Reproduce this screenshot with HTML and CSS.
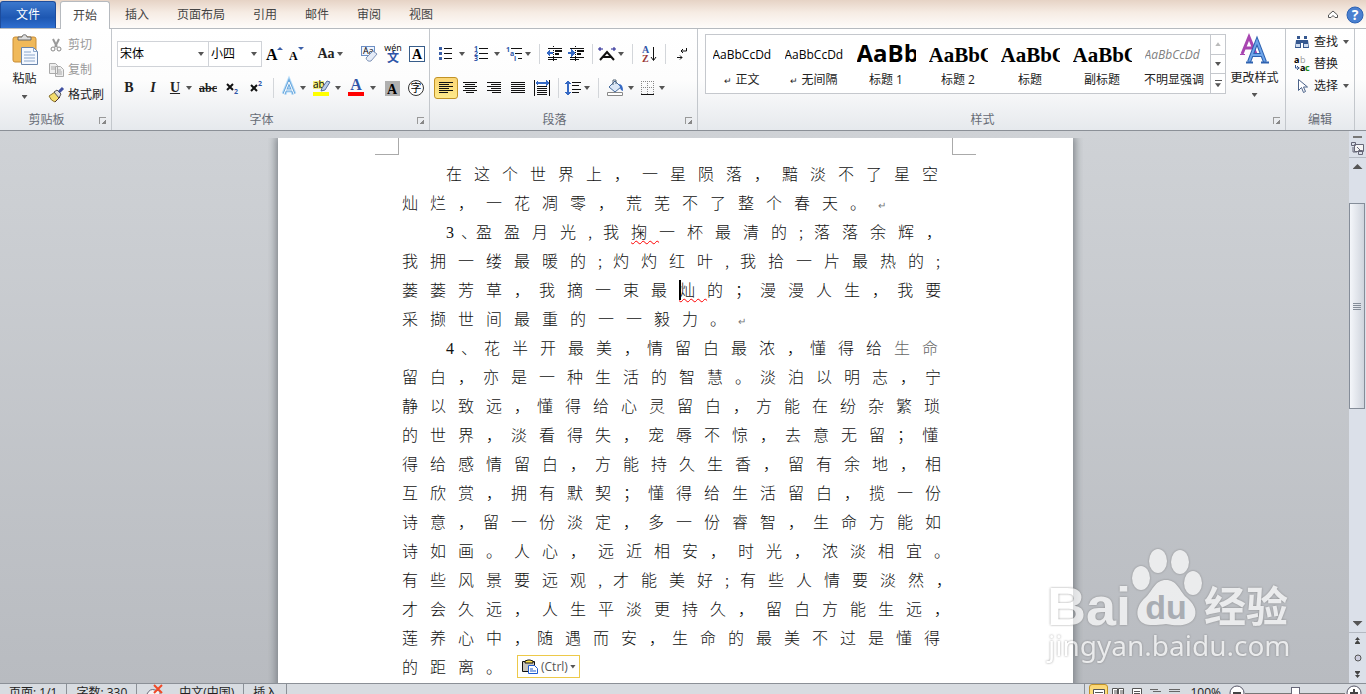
FILE: index.html
```html
<!DOCTYPE html>
<html lang="zh-CN">
<head>
    <meta charset="UTF-8">
    <meta name="viewport" content="width=device-width, initial-scale=1.0">
    <title>Word</title>
    <link rel="stylesheet" href="styles.css">
</head>
<body>
    <!-- 选项卡 -->
    <nav class="tabs">
        <button class="tab file">文件</button>
        <button class="tab active">开始</button>
        <button class="tab">插入</button>
        <button class="tab">页面布局</button>
        <button class="tab">引用</button>
        <button class="tab">邮件</button>
        <button class="tab">审阅</button>
        <button class="tab">视图</button>
        <div class="tabs-right">
            <button class="btn" aria-label="最小化功能区"><svg width="12" height="10"><path d="M1.500 5 6 1l4.500 4v2.500H8L6 5.500 4 7.500H1.500z" fill="#fff" stroke="#555"/></svg></button>
            <button class="btn" aria-label="帮助"><svg width="18" height="18"><circle cx="9" cy="9" r="8" fill="#4a80d0" stroke="#2d62b4"/><text x="9" y="14" text-anchor="middle" class="help-mark">?</text></svg></button>
        </div>
    </nav>

    <!-- 功能区 -->
    <header class="ribbon">
        <section class="group g-clip">
            <div class="group-body clip">
                <button class="paste">
                    <svg width="28" height="32">
                        <rect x="2" y="3" width="23" height="25" rx="2" fill="#f0b95a" stroke="#c98d35"/>
                        <path d="M7 6V3h4c0-3 5-3 5 0h4v3z" fill="#ddd" stroke="#666"/>
                        <path d="M10.500 13.500h12l4 4v13h-16z" fill="#f4f8ff" stroke="#6a86ac"/>
                        <path d="M22.500 13.500v4h4M13 18h7M13 21h11M13 24h11M13 27h11" fill="none" stroke="#8ba6ca"/>
                    </svg>
                    <span>粘贴</span>
                    <i class="arrow"></i>
                </button>
                <div class="clip-list">
                    <button class="line-btn off"><svg width="16" height="16"><path d="M5 2l4 8M11 2 7 10" stroke="#999" stroke-width="2"/><circle cx="5" cy="12" r="2" fill="none" stroke="#888"/><circle cx="11" cy="12" r="2" fill="none" stroke="#888"/></svg>剪切</button>
                    <button class="line-btn off"><svg width="16" height="16"><path d="M1.500 1.500h6l2 2v8h-8zM7.500 4.500h5l3 3v7h-8z" fill="#eee" stroke="#aaa"/><path d="M3 5h4M3 7h4M9 8h4M9 10h5M9 12h5" stroke="#aaa"/></svg>复制</button>
                    <button class="line-btn"><svg width="16" height="16"><path d="M1 9l6-4 5 5-5 5q-4-1-6-6z" fill="#f3dc6c" stroke="#8a7430"/><path d="M6 5l3-2 4 4-2 4z" fill="#ddd" stroke="#555"/><path d="M11 5l4-4" stroke="#3f4fa0" stroke-width="3"/><path d="M7 15l5-5" stroke="#533"/></svg>格式刷</button>
                </div>
            </div>
            <div class="group-label">剪贴板<i class="launcher"></i></div>
        </section>

        <section class="group g-font">
            <div class="group-body rows">
                <div class="row">
                    <div class="combo name"><input type="text" value="宋体" aria-label="字体"><i class="arrow"></i></div>
                    <div class="combo size"><input type="text" value="小四" aria-label="字号"><i class="arrow"></i></div>
                    <button class="btn w24" aria-label="增大字体"><svg width="20" height="20"><text x="2" y="16" class="serif s16">A</text><path d="M13 6h6l-3-3z" fill="#3a5fa8"/></svg></button>
                    <button class="btn w20" aria-label="缩小字体"><svg width="20" height="20"><text x="3" y="16" class="serif s12">A</text><path d="M12 3h6l-3 3z" fill="#3a5fa8"/></svg></button>
                    <i class="sep"></i>
                    <button class="btn w20 serif s14" aria-label="更改大小写">Aa</button><i class="arrow"></i>
                    <i class="sep"></i>
                    <button class="btn w24" aria-label="清除格式"><svg width="18" height="18"><rect x="1.500" y="1.500" width="13" height="9" fill="#eef4ff" stroke="#6d8fc4"/><text x="3" y="9" class="s9">Aa</text><path d="M6 13l7-7 4 3-6 7q-4 1-5-3z" fill="#e5ecf8" stroke="#7f93b6"/></svg></button>
                    <button class="btn w24" aria-label="拼音指南"><svg width="18" height="20"><text x="9" y="7" text-anchor="middle" class="s9">wén</text><text x="9" y="18" text-anchor="middle" class="s12 blue bold">文</text></svg></button>
                    <button class="btn w24" aria-label="字符边框"><svg width="17" height="17"><rect x=".5" y=".5" width="15" height="15" fill="#fff" stroke="#385d8a"/><text x="8" y="13" text-anchor="middle" class="serif s14">A</text></svg></button>
                </div>
                <div class="row">
                    <button class="btn w24 serif s14">B</button>
                    <button class="btn w24 serif s14 it">I</button>
                    <button class="btn w20 serif s14 un">U</button><i class="arrow"></i>
                    <button class="btn w24 serif s12 strike">abc</button>
                    <button class="btn w24" aria-label="下标"><svg width="16" height="16"><path d="M3 4l6 6M9 4l-6 6" stroke="#111" stroke-width="2"/><text x="10" y="14" class="s7 blue bold">2</text></svg></button>
                    <button class="btn w24" aria-label="上标"><svg width="16" height="16"><path d="M3 5l6 6M9 5l-6 6" stroke="#111" stroke-width="2"/><text x="10" y="6" class="s7 blue bold">2</text></svg></button>
                    <i class="sep"></i>
                    <button class="btn w20" aria-label="文本效果"><svg width="18" height="18"><path d="M4 15 9 3l5 12M6 11h6" fill="none" stroke="#b5dcfa" stroke-width="5"/><path d="M4 15 9 3l5 12M6 11h6" fill="none" stroke="#6aa7dc" stroke-width="3"/><path d="M4 15 9 3l5 12M6 11h6" fill="none" stroke="#fff"/></svg></button><i class="arrow"></i>
                    <button class="btn w24" aria-label="突出显示"><svg width="18" height="18"><path d="M0 2h11v8H0z" fill="#f3ee7d"/><text x="0" y="9" class="s10">ab</text><path d="M9 9l5-7 3 1-5 8-4 1z" fill="#b9cde8" stroke="#55709c"/><path d="M0 13h16v4H0z" fill="#ff0"/></svg></button><i class="arrow"></i>
                    <button class="btn w24" aria-label="字体颜色"><svg width="18" height="18"><text x="8" y="11" text-anchor="middle" class="serif s16 blue">A</text><path d="M0 13h16v4H0z" fill="red"/></svg></button><i class="arrow"></i>
                    <button class="btn w24" aria-label="字符底纹"><svg width="15" height="15"><path d="M0 0h15v15H0z" fill="#b0b0b0"/><text x="7" y="13" text-anchor="middle" class="serif s14">A</text></svg></button>
                    <button class="btn w24" aria-label="带圈字符"><svg width="18" height="18"><circle cx="9" cy="9" r="7.500" fill="#fff" stroke="#333"/><text x="9" y="13" text-anchor="middle" class="s11">字</text></svg></button>
                </div>
            </div>
            <div class="group-label">字体<i class="launcher"></i></div>
        </section>

        <section class="group g-para">
            <div class="group-body rows">
                <div class="row">
                    <button class="btn w24" aria-label="项目符号"><svg class="crisp" width="16" height="16"><path d="M1 1h3v3H1zM1 6h3v3H1zM1 11h3v3H1z" fill="#3a5fa8"/><path d="M6 2.500h8M6 7.500h8M6 12.500h8" stroke="#111"/></svg></button><i class="arrow"></i>
                    <button class="btn w24" aria-label="编号"><svg width="16" height="16"><text x="1" y="5" class="s7 blue bold">1</text><text x="1" y="10" class="s7 blue bold">2</text><text x="1" y="15" class="s7 blue bold">3</text><path d="M6 2.500h9M6 7.500h9M6 12.500h9" stroke="#111"/></svg></button><i class="arrow"></i>
                    <button class="btn w20" aria-label="多级列表"><svg width="18" height="16"><text x="1" y="6" class="s7 blue bold">1</text><text x="5" y="10" class="s7 blue bold">a</text><text x="9" y="15" class="s7 blue bold">i</text><path d="M6 2.500h11M10 7.500h7M13 12.500h4" stroke="#111"/></svg></button><i class="arrow"></i>
                    <i class="sep"></i>
                    <button class="btn w20" aria-label="减少缩进"><svg class="crisp" width="17" height="16"><path d="M7.500 0v16" stroke="#111" stroke-dasharray="1"/><path d="M2 2.500h14M2 11.500h14M2 13.500h9" stroke="#111"/><path d="M9 5h7M9 8h4" stroke="#111" stroke-width="2"/><path d="M0 7l4-4v3h3v2H4v3z" fill="#3569c4"/></svg></button>
                    <button class="btn w24" aria-label="增加缩进"><svg class="crisp" width="17" height="16"><path d="M7.500 0v16" stroke="#111" stroke-dasharray="1"/><path d="M2 2.500h14M2 11.500h14M2 13.500h9" stroke="#111"/><path d="M9 5h7M9 8h4" stroke="#111" stroke-width="2"/><path d="M7 7 3 3v3H0v2h3v3z" fill="#3569c4"/></svg></button>
                    <i class="sep"></i>
                    <button class="btn w20" aria-label="中文版式"><svg width="18" height="16"><path d="M2 14l7-8 7 8M5 11h8" fill="none" stroke="#111" stroke-width="2"/><path d="M0 3h5M2 1v4M18 3h-5M16 1v4" fill="none" stroke="#1b1b8e"/></svg></button><i class="arrow"></i>
                    <i class="sep"></i>
                    <button class="btn w24" aria-label="排序"><svg width="17" height="18"><text x="1" y="8" class="serif s10 blue">A</text><text x="1" y="17" class="serif s10 brown">Z</text><path d="M12.500 2v13M10 12l2.500 3.500L15 12" fill="none" stroke="#111"/></svg></button>
                    <i class="sep"></i>
                    <button class="btn w24" aria-label="编辑标记"><svg width="12" height="14"><path d="M10.500 1v3H5M7 2 5 4l2 2M1 10.500h5M4 8.500l2 2-2 2" fill="none" stroke="#111"/></svg></button>
                </div>
                <div class="row">
                    <button class="btn w24 on" aria-label="左对齐"><svg class="crisp" width="14" height="12"><path d="M0 .5h14M0 2.500h10M0 4.500h14M0 6.500h10M0 8.500h14M0 10.500h9" stroke="#111"/></svg></button>
                    <button class="btn w24" aria-label="居中"><svg class="crisp" width="14" height="12"><path d="M0 .5h14M2 2.500h10M0 4.500h14M2 6.500h10M0 8.500h14M3 10.500h8" stroke="#111"/></svg></button>
                    <button class="btn w24" aria-label="右对齐"><svg class="crisp" width="14" height="12"><path d="M0 .5h14M4 2.500h10M0 4.500h14M4 6.500h10M0 8.500h14M5 10.500h9" stroke="#111"/></svg></button>
                    <button class="btn w24" aria-label="两端对齐"><svg class="crisp" width="14" height="12"><path d="M0 .5h14M0 2.500h14M0 4.500h14M0 6.500h14M0 8.500h14M0 10.500h14" stroke="#111"/></svg></button>
                    <button class="btn w24" aria-label="分散对齐"><svg class="crisp" width="16" height="16"><path d="M.5 0v16M15.500 0v16M3 6.500h10M3 8.500h10M3 10.500h10M3 12.500h10M3 14.500h10" stroke="#111"/><path d="M1 3l3-3v2h8V0l3 3-3 3V4H4v2z" fill="#3569c4"/></svg></button>
                    <i class="sep"></i>
                    <button class="btn w20" aria-label="行距"><svg class="crisp" width="16" height="16"><path d="M3 0l3 4H4v8h2l-3 4-3-4h2V4H0z" fill="#3569c4"/><path d="M7 2.500h9M7 5.500h7M7 9.500h9M7 12.500h7" stroke="#111"/></svg></button><i class="arrow"></i>
                    <i class="sep"></i>
                    <button class="btn w24" aria-label="底纹"><svg width="17" height="18"><path d="M2 8l6-6 6 6-6 5z" fill="#dce8f7" stroke="#456a9c"/><path d="M6 6V1h3v4" fill="none" stroke="#567"/><path d="M12 5q4 0 4 7-3-1-3-4z" fill="#3569c4"/><path d="M.5 13.500h15v3H.5z" fill="#fff" stroke="#888"/></svg></button><i class="arrow"></i>
                    <button class="btn w20" aria-label="边框"><svg class="crisp" width="14" height="15"><path d="M.5 0v13M6.500 0v13M12.500 0v13M0 .5h13M0 6.500h13" stroke="#888" stroke-dasharray="1"/><path d="M0 13.500h13" stroke="#111"/></svg></button><i class="arrow"></i>
                </div>
            </div>
            <div class="group-label">段落<i class="launcher"></i></div>
        </section>

        <section class="group g-style">
            <div class="group-body styles">
                <div class="gallery">
                    <button class="style"><b class="pv">AaBbCcDd</b><span><small>↵</small> 正文</span></button>
                    <button class="style"><b class="pv">AaBbCcDd</b><span><small>↵</small> 无间隔</span></button>
                    <button class="style"><b class="pv h1">AaBb</b><span>标题 1</span></button>
                    <button class="style"><b class="pv h2">AaBbC</b><span>标题 2</span></button>
                    <button class="style"><b class="pv h2">AaBbC</b><span>标题</span></button>
                    <button class="style"><b class="pv h2">AaBbC</b><span>副标题</span></button>
                    <button class="style"><b class="pv em">AaBbCcDd</b><span>不明显强调</span></button>
                    <div class="gallery-nav">
                        <button class="off" aria-label="上一行"><i class="arrow up"></i></button>
                        <button aria-label="下一行"><i class="arrow"></i></button>
                        <button class="more" aria-label="其他"><i class="arrow"></i></button>
                    </div>
                </div>
                <button class="change">
                    <svg width="30" height="30"><path d="M2 19 9 2l7 17M5 13h8" fill="none" stroke="#a845b0" stroke-width="3"/><path d="M0 19.500h5M12 19.500h5" stroke="#a845b0"/><path d="M9 27 17 6l8 21M12 20h10" fill="none" stroke="#2e62b0" stroke-width="4"/><path d="M9 27 17 6l8 21M12 20h10" fill="none" stroke="#6ea5ea" stroke-width="2"/><path d="M6 27.500h7M21 27.500h8" stroke="#2e62b0" stroke-width="2"/></svg>
                    <span>更改样式</span>
                    <i class="arrow"></i>
                </button>
            </div>
            <div class="group-label">样式<i class="launcher"></i></div>
        </section>

        <section class="group g-edit">
            <div class="group-body edit">
                <button class="line-btn"><svg width="16" height="16"><path d="M3 2h3v3H3zM10 2h3v3h-3zM1 14l1-8h5v8zM9 14V6h5l1 8zM6 6h4v3H6z" fill="#35578f"/><path d="M2 10h4v3H2zM10 10h4v3h-4z" fill="#cfdcf0"/></svg>查找<i class="arrow"></i></button>
                <button class="line-btn"><svg width="16" height="16"><text x="0" y="7" class="s9 bold">a</text><text x="6" y="7" class="s9 gray">b</text><text x="6" y="15" class="s9 bold">a</text><text x="11" y="15" class="s9 bold green">c</text><path d="M1.500 9v3h4M3 10l2 2-2 2" fill="none" stroke="#35578f"/></svg>替换</button>
                <button class="line-btn"><svg width="16" height="16"><path d="M4.500 1.500v11l3-3 2 5 2-1-2-4.500h4z" fill="#fff" stroke="#4b6289"/></svg>选择<i class="arrow"></i></button>
            </div>
            <div class="group-label">编辑</div>
        </section>
    </header>

    <!-- 文档 -->
    <main class="workspace">
        <div class="desk">
            <article class="page">
                <i class="crop left"></i>
                <i class="crop right"></i>
                <p class="ln first">在这个世界上，一星陨落，黯淡不了星空</p>
                <p class="ln">灿烂，一花凋零，荒芜不了整个春天。<i class="ret">↵</i></p>
                <p class="ln first"><i class="num">3</i><i class="half">、</i>盈盈月光<i class="half">,</i>我<u>掬</u>一杯最清的<i class="half">;</i>落落余辉，</p>
                <p class="ln">我拥一缕最暖的<i class="half">;</i>灼灼红叶<i class="half">,</i>我拾一片最热的<i class="half">;</i></p>
                <p class="ln tight">蒌蒌芳草<i>，</i>我摘一束最<span class="caret"></span><u>灿</u>的<i>；</i>漫漫人生<i>，</i>我要</p>
                <p class="ln">采撷世间最重的一一毅力。<i class="ret">↵</i></p>
                <p class="ln first tighter"><i class="num">4</i><i>、</i>花半开最美<i>，</i>情留白最浓<i>，</i>懂得给<span class="light">生命</span></p>
                <p class="ln tight">留白<i>，</i>亦是一种生活的智慧<i>。</i>淡泊以明志<i>，</i>宁</p>
                <p class="ln tighter">静以致远<i>，</i>懂得给心灵留白<i>，</i>方能在纷杂繁琐</p>
                <p class="ln tight">的世界<i>，</i>淡看得失<i>，</i>宠辱不惊<i>，</i>去意无留<i>；</i>懂</p>
                <p class="ln tight">得给感情留白<i>，</i>方能持久生香<i>，</i>留有余地<i>，</i>相</p>
                <p class="ln tight">互欣赏<i>，</i>拥有默契<i>；</i>懂得给生活留白<i>，</i>揽一份</p>
                <p class="ln tight">诗意<i>，</i>留一份淡定<i>，</i>多一份睿智<i>，</i>生命方能如</p>
                <p class="ln">诗如画。人心，远近相安，时光，浓淡相宜。</p>
                <p class="ln">有些风景要远观<i class="half">,</i>才能美好<i class="half">;</i>有些人情要淡然，</p>
                <p class="ln">才会久远，人生平淡更持久，留白方能生远，</p>
                <p class="ln tighter">莲养心中<i>，</i>随遇而安<i>，</i>生命的最美不过是懂得</p>
                <p class="ln last">的距离。<button class="paste-opt"><svg width="18" height="16"><path d="M1.500 2.500h12v10h-12z" fill="#c9c5bb" stroke="#111"/><path d="M4 4V2l3-1h2l3 1v2z" fill="#ffe34d" stroke="#111"/><path d="M7.500 6.500h6l3 3v5h-9z" fill="#fff" stroke="#1d5bd0"/><path d="M9 10h3M9 12h6" stroke="#1d5bd0"/></svg>(Ctrl)<i class="arrow"></i></button></p>
            </article>
        </div>

        <aside class="scroll">
            <i class="split"></i>
            <button class="ruler" aria-label="标尺"><svg width="13" height="13"><path d="M3.500 2.500h9v7h-9z" fill="#f5f5f5" stroke="#667"/><path d="M.5.500h4v3h-4zM7.500 8.500h4v4h-4zM2 5v5h4M6 5l4 4" fill="none" stroke="#667"/></svg></button>
            <button aria-label="向上滚动"><i class="arrow big up"></i></button>
            <div class="track"><div class="thumb"><i></i></div></div>
            <button aria-label="向下滚动"><i class="arrow big"></i></button>
            <button class="nav first-nav" aria-label="上一页"><svg width="7" height="8"><path d="M3.500 0L6 3H1zM3.500 3L6 6H1zM1 6h5v1H1z" fill="#444"/></svg></button>
            <button class="nav" aria-label="选择浏览对象"><svg width="8" height="8"><circle cx="4" cy="4" r="3" fill="#ccd" stroke="#555"/></svg></button>
            <button class="nav" aria-label="下一页"><svg width="7" height="8"><path d="M1 0h5v1H1zM1 1h5L3.500 4zM1 4h5L3.500 7z" fill="#444"/></svg></button>
        </aside>

        <svg class="watermark" width="256" height="120">
            <g class="wm">
                <text x="2" y="80" class="wm-bai">Bai</text>
                <ellipse cx="96" cy="33" rx="9" ry="12"/>
                <ellipse cx="113" cy="16" rx="9" ry="12"/>
                <ellipse cx="135" cy="17" rx="9" ry="12"/>
                <ellipse cx="148" cy="38" rx="9" ry="12"/>
                <path d="M121 35c-11 0-13 10-20 17-7 6-10 13-8 20 3 9 13 9 28 7 15 3 26 1 29-8 2-7-2-13-9-19-7-7-9-17-20-17z"/>
                <text x="159" y="77" class="wm-jy">经验</text>
                <text x="3" y="111" class="wm-url">jingyan.baidu.com</text>
            </g>
            <text x="121" y="74" text-anchor="middle" class="wm-du">du</text>
        </svg>
    </main>

    <!-- 状态栏 -->
    <footer class="status">
        <div class="status-in">
            <span class="cell">页面: 1/1</span>
            <span class="cell">字数: 330</span>
            <span class="cell proof"><svg width="18" height="16"><path d="M1 10q3-6 8-4l5 1v6H1z" fill="#f4f4f4" stroke="#667"/><path d="M8 1l8 8M16 1l-8 8" stroke="#f04a28" stroke-width="2"/></svg>中文(中国)</span>
            <span class="cell">插入</span>
            <div class="views">
                <button class="on" aria-label="页面视图"><svg width="12" height="12"><path d="M.5.500h11v11H.5zM2 3.500h8M2 5.500h8M2 7.500h8" fill="#fff" stroke="#555"/></svg></button>
                <button aria-label="阅读版式"><svg width="12" height="12"><path d="M.5.500h5v8h-5zM6.500.500h5v8h-5zM2 3h3M8 3h3M2 5h3M8 5h3" fill="#fff" stroke="#555"/></svg></button>
                <button aria-label="Web 版式"><svg width="12" height="12"><path d="M1.500.500h9v11h-9zM3 3.500h6M3 5.500h6" fill="#fff" stroke="#555"/></svg></button>
                <button aria-label="大纲"><svg width="12" height="12"><path d="M0 1.500h8M3 3.500h8M3 6.500h8" stroke="#666"/></svg></button>
                <button aria-label="草稿"><svg width="12" height="12"><path d="M0 1.500h11M0 3.500h11M0 6.500h11" stroke="#666"/></svg></button>
                <span class="pct">100%</span>
                <button class="zoom-btn" aria-label="缩小"><svg width="16" height="16"><circle cx="8" cy="8" r="7" fill="#fff" stroke="#556"/><path d="M4 8h8" stroke="#444" stroke-width="2"/></svg></button>
                <input class="zoom" type="range" value="50" aria-label="显示比例">
                <button class="zoom-btn" aria-label="放大"><svg width="16" height="16"><circle cx="8" cy="8" r="7" fill="#fff" stroke="#556"/><path d="M4 8h8M8 4v8" stroke="#444" stroke-width="2"/></svg></button>
            </div>
        </div>
    </footer>
</body>
</html>
```
FILE: styles.css
```css
* {margin: 0; padding: 0; box-sizing: border-box;}
body {
    height: 100vh;
    overflow: hidden;
    display: flex;
    flex-direction: column;
    font: 12px/16px "Open Sans", "Noto Sans CJK SC", sans-serif;
    color: #222;
}
button {
    font: inherit;
    color: inherit;
    background: none;
    border: 0;
}
i {font-style: normal;}
svg {display: block; flex: none; overflow: visible;}
.crisp {shape-rendering: crispEdges;}

/* 下拉小三角 */
.arrow {
    flex: none;
    width: 6px;
    height: 4px;
    background: #555;
    clip-path: polygon(0 0, 100% 0, 50% 100%);
}
.arrow.up {clip-path: polygon(50% 0, 100% 100%, 0 100%);}
.arrow.big {width: 10px; height: 5px;}

/* 选项卡 */
.tabs {
    flex: none;
    height: 29px;
    display: flex;
    padding-top: 1px;
    border-bottom: 1px solid #b6babf;
    background: linear-gradient(#e6d3c5, #f6ece4 45%, #fefcfa);
}
.tab {
    padding: 0 14px;
    color: #444;
}
.tab.file {
    width: 56px;
    margin-right: 4px;
    padding: 0;
    color: #fff;
    border: 1px solid #1d4c9c;
    border-bottom: 0;
    border-radius: 3px 3px 0 0;
    background: linear-gradient(#3c78cd, #1d57b2 60%, #2f6fd0);
}
.tab.active {
    width: 50px;
    height: 28px;
    margin-right: 1px;
    padding: 0;
    border: 1px solid #b6babf;
    border-bottom: 0;
    border-radius: 3px 3px 0 0;
    background: #fff;
}
.tabs-right {
    margin-left: auto;
    display: flex;
    align-items: center;
    gap: 7px;
    padding-right: 2px;
}
.help-mark {font: bold 14px "Open Sans", sans-serif; fill: #fff;}

/* 功能区 */
.ribbon {
    flex: none;
    height: 102px;
    display: flex;
    border-bottom: 1px solid #8b9097;
    background: linear-gradient(#fff, #fdfdfd 50%, #e6e9ed);
}
.group {
    display: flex;
    flex-direction: column;
    border-right: 1px solid #c3c7cc;
}
.g-clip {width: 112px;}
.g-font {width: 318px;}
.g-para {width: 268px;}
.g-style {flex: 1;}
.g-edit {width: 69px; margin-right: 11px;}
.group-body {height: 81px;}
.group-label {
    position: relative;
    text-align: center;
    line-height: 20px;
    padding-right: 18px;
    color: #666b75;
}
.g-edit .group-label {padding-right: 0;}
.launcher {
    position: absolute;
    right: 5px;
    top: 7px;
    width: 7px;
    height: 7px;
    border-top: 1px solid #999;
    border-left: 1px solid #999;
    background: linear-gradient(135deg, transparent 65%, #888 65%);
}
.btn {
    flex: none;
    height: 22px;
    display: flex;
    align-items: center;
    justify-content: center;
}
.w24 {width: 24px;}
.w20 {width: 20px;}
.on {
    border: 1px solid #c29326;
    border-radius: 3px;
    background: linear-gradient(#fbd675, #fde98b);
}

.clip {display: flex;}
.paste {
    width: 48px;
    padding: 5px 0 0 1px;
    display: flex;
    flex-direction: column;
    align-items: center;
}
.paste span {margin: 5px 0 8px;}
.clip-list {padding-top: 3px;}
.line-btn {
    height: 25px;
    display: flex;
    align-items: center;
    gap: 4px;
}
.line-btn.off {color: #999;}

.rows {padding: 12px 0 0 4px;}
.row {
    height: 26px;
    display: flex;
    align-items: center;
}
.row + .row {margin-top: 8px;}
.row > .arrow {margin: 0 4px 0 1px;}
.sep {
    width: 1px;
    height: 20px;
    margin: 0 4px;
    background: #d3d6da;
}
.g-font .rows {padding-left: 5px;}
.g-font .sep {margin: 0 5px;}
.combo {
    height: 26px;
    display: flex;
    align-items: center;
    padding-right: 4px;
    border: 1px solid #d0d3d8;
    background: #fff;
}
.combo.name {width: 92px;}
.combo.size {width: 54px; margin-left: -1px;}
.combo input {
    flex: 1;
    min-width: 0;
    padding-left: 2px;
    border: 0;
    outline: 0;
    font: inherit;
    color: #000;
}

/* 图标里的文字 */
.serif {font-family: "Liberation Serif", serif; font-weight: bold;}
.s7 {font-size: 7px;}
.s9 {font-size: 9px;}
.s10 {font-size: 10px;}
.s11 {font-size: 11px;}
.s12 {font-size: 12px;}
.s14 {font-size: 14px;}
.s16 {font-size: 16px;}
.bold {font-weight: bold;}
.blue {fill: #2f55a8;}
.brown {fill: #983535;}
.gray {fill: #999;}
.green {fill: #178a17;}
.it {font-style: italic;}
.un {text-decoration: underline;}
.strike {text-decoration: line-through;}

/* 样式库 */
.styles {
    display: flex;
    padding: 5px 2px 0 7px;
}
.gallery {
    flex: none;
    height: 60px;
    display: flex;
    border: 1px solid #c5c8cd;
    background: #fff;
}
.style {
    width: 72px;
    padding-top: 4px;
    display: flex;
    flex-direction: column;
    align-items: center;
    white-space: nowrap;
}
.style small {font-size: 9px;}
.pv {
    width: 59px;
    height: 33px;
    overflow: hidden;
    text-align: left;
    font: 12px/32px "Open Sans", sans-serif;
    color: #000;
}
.pv.h1 {font-size: 24px; font-weight: bold; line-height: 28px;}
.pv.h2 {font: bold 21px/32px "Liberation Serif", serif;}
.pv.em {font-style: italic; color: #808080;}
.gallery-nav {
    width: 15px;
    margin-left: auto;
    display: flex;
    flex-direction: column;
    border-left: 1px solid #c5c8cd;
}
.gallery-nav button {
    flex: 1;
    display: flex;
    align-items: center;
    justify-content: center;
}
.gallery-nav button + button {border-top: 1px solid #c5c8cd;}
.gallery-nav .off {opacity: .4;}
.gallery-nav .more {flex-direction: column; gap: 2px;}
.more::before {content: ""; width: 7px; height: 1px; background: #555;}
.change {
    flex: 1;
    display: flex;
    flex-direction: column;
    align-items: center;
    white-space: nowrap;
    padding-top: 1px;
}
.change span {margin: 5px 0 7px;}
.edit {padding: 2px 0 0 8px;}
.edit .line-btn {height: 22px;}
.edit .arrow {margin-left: 1px;}

/* 文档区 */
.workspace {
    position: relative;
    flex: 1;
    min-height: 0;
    display: flex;
    background: linear-gradient(#cfd2d6, #b8bbc0);
}
.desk {
    flex: 1;
    display: flex;
    justify-content: center;
    padding: 7px 0 0 2px;
    overflow: hidden;
}
.page {
    position: relative;
    flex: none;
    width: 795px;
    height: 1123px;
    padding: 21px 124px;
    background: #fff;
    box-shadow: 0 0 8px 2px #7b8086;
    clip-path: inset(0 -10px);
}
.crop {
    position: absolute;
    top: 0;
    width: 24px;
    height: 17px;
    border: 0 solid #aaa;
    border-bottom-width: 1px;
}
.crop.left {left: 97px; border-right-width: 1px;}
.crop.right {right: 97px; border-left-width: 1px;}

.ln {
    height: 29px;
    font: 300 16px/29px "Noto Sans CJK SC", sans-serif;
    letter-spacing: 12px;
    white-space: nowrap;
    color: #111;
}
.ln.first {padding-left: 44px;}
.tight i {letter-spacing: 9px;}
.tighter i {letter-spacing: 7px;}
.ln .half, .ln .num {
    display: inline-block;
    width: 15px;
    letter-spacing: 0;
}
.ln .num {font-family: "Liberation Serif", serif; font-weight: normal;}
.ln .ret {font-size: 10px; color: #777;}
.ln u {
    text-decoration: underline wavy red 1px;
    text-underline-offset: 2px;
}
.light {color: #666;}
.caret {
    position: absolute;
    width: 2px;
    height: 20px;
    margin-top: 5px;
    background: #000;
}
.ln.last {display: flex; align-items: center;}
.paste-opt {
    height: 23px;
    margin-left: 3px;
    padding: 0 3px;
    display: flex;
    align-items: center;
    gap: 2px;
    border: 1px solid #edc94a;
    background: #fff;
    font: 12px/16px "Open Sans", sans-serif;
    letter-spacing: 0;
    color: #555;
}

/* 滚动条 */
.scroll {
    width: 17px;
    display: flex;
    flex-direction: column;
    background: #dbe0e9;
}
.scroll button {
    height: 17px;
    display: flex;
    align-items: center;
    justify-content: center;
}
.split {
    width: 9px;
    height: 2px;
    margin: 5px 4px 1px;
    background: #777;
}
.scroll .ruler {height: 19px; border-bottom: 1px solid #b4b9c2;}
.track {flex: 1; padding-top: 28px;}
.thumb {
    height: 50%;
    width: 16px;
    display: flex;
    align-items: center;
    justify-content: center;
    border: 1px solid #858d99;
    background: linear-gradient(90deg, #f4f6fa, #cfd4dd);
}
.thumb i {
    width: 8px;
    height: 7px;
    background: repeating-linear-gradient(#858d99 0 1px, transparent 1px 2px);
}
.scroll .first-nav {border-top: 1px solid #b4b9c2;}

/* 水印 */
.watermark {
    position: absolute;
    right: 65px;
    bottom: 18px;
    pointer-events: none;
}
.wm {
    fill: #fff;
    opacity: .7;
    filter: drop-shadow(0 0 1px #777);
}
.wm-bai {font: bold 54px "Liberation Sans", sans-serif;}
.wm-jy {font: bold 42px "Noto Sans CJK SC", sans-serif;}
.wm-url {font: 28px "Noto Sans", sans-serif;}
.wm-du {font: bold 34px "Liberation Sans", sans-serif; fill: #a9adb3;}

/* 状态栏，只露出上半截 */
.status {
    flex: none;
    height: 11px;
    overflow: hidden;
    border-top: 1px solid #8b9097;
    background: #d8dce1;
}
.status-in {height: 20px; display: flex;}
.cell {
    padding: 0 9px;
    line-height: 18px;
    border-right: 1px solid #8b9097;
}
.proof {display: flex; gap: 15px;}
.views {
    margin-left: auto;
    display: flex;
    border-left: 1px solid #8b9097;
    padding: 0 4px;
}
.views button {
    width: 19px;
    height: 20px;
    padding-top: 4px;
    display: flex;
    justify-content: center;
}
.pct {margin: 0 7px 0 6px; line-height: 18px;}
.views .zoom-btn {width: 17px; padding-top: 1px;}
.zoom {
    appearance: none;
    width: 100px;
    height: 19px;
    background: linear-gradient(#777, #777) center / 100% 1px no-repeat;
}
.zoom::-webkit-slider-thumb {
    appearance: none;
    width: 9px;
    height: 14px;
    border: 1px solid #667;
    background: #fff;
}
```
